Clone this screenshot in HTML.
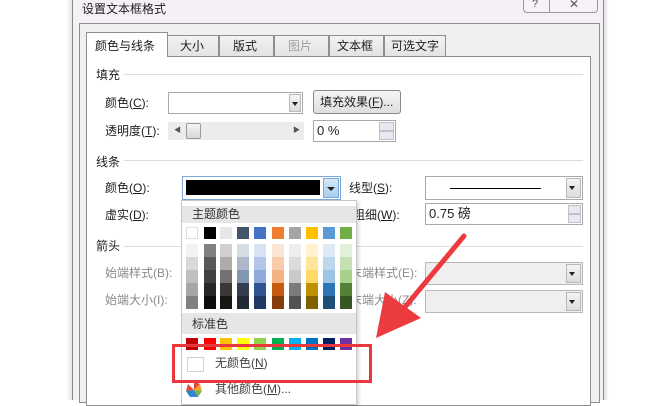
<!DOCTYPE html>
<html><head><meta charset="utf-8"><style>
*{margin:0;padding:0;box-sizing:border-box}
body{width:650px;height:400px;overflow:hidden;background:#fff;position:relative;font-family:"Liberation Sans","Noto Sans CJK SC",sans-serif;font-size:12px;color:#1e1e1e}
.a{position:absolute}
.t{position:absolute;white-space:nowrap;line-height:14px}
.g{color:#8a8a8a}
.combo{position:absolute;background:#fff;border:1px solid #a9a9a9}
.dd{position:absolute;right:1px;top:1px;bottom:1px;width:12px;background:linear-gradient(#f4f4f4,#dcdcdc);border:1px solid #b8b8b8}
.dd:after{content:"";position:absolute;left:2px;top:7px;border-left:3.5px solid transparent;border-right:3.5px solid transparent;border-top:4px solid #222}
.sep{position:absolute;height:1px;background:#dcdcdc}
.sw{position:absolute;width:12px;height:12px}
u{text-decoration:underline}
</style></head><body>
<div class="a" style="left:66px;top:0;width:6px;height:400px;background:linear-gradient(90deg,#fff,#e6e6e6)"></div>
<div class="a" style="left:603px;top:0;width:6px;height:400px;background:linear-gradient(90deg,#d8d8d8,#fff)"></div>
<div class="a" style="left:72px;top:0;width:532px;height:400px;background:#f5f0f6;border-left:1px solid #8a8a8a;border-right:1px solid #8a8a8a"></div>
<div class="t" style="left:82px;top:2px;font-size:12px">设置文本框格式</div>
<div class="a" style="left:523px;top:-2px;width:75px;height:15px;border:1px solid #9a9a9a;border-radius:0 0 4px 4px;background:#f7f2f8"></div>
<div class="a" style="left:549px;top:-2px;width:1px;height:15px;background:#9a9a9a"></div>
<div class="t" style="left:532px;top:-3px;font-size:11px;color:#555">?</div>
<div class="t" style="left:569px;top:-3px;font-size:12px;color:#555">✕</div>
<div class="a" style="left:79px;top:23px;width:521px;height:380px;background:#f0f0f0;border:1px solid #8e8e8e"></div>
<div class="a" style="left:86px;top:56px;width:505px;height:350px;background:#fff;border:1px solid #8e8e8e"></div>
<div class="a" style="left:167px;top:35px;width:52px;height:21px;background:linear-gradient(#f2f2f2,#e3e3e3);border:1px solid #8e8e8e;border-bottom:none"></div>
<div class="a" style="left:219px;top:35px;width:55px;height:21px;background:linear-gradient(#f2f2f2,#e3e3e3);border:1px solid #8e8e8e;border-bottom:none"></div>
<div class="a" style="left:274px;top:35px;width:55px;height:21px;background:linear-gradient(#f2f2f2,#e3e3e3);border:1px solid #8e8e8e;border-bottom:none"></div>
<div class="a" style="left:329px;top:35px;width:55px;height:21px;background:linear-gradient(#f2f2f2,#e3e3e3);border:1px solid #8e8e8e;border-bottom:none"></div>
<div class="a" style="left:384px;top:35px;width:62px;height:21px;background:linear-gradient(#f2f2f2,#e3e3e3);border:1px solid #8e8e8e;border-bottom:none"></div>
<div class="a" style="left:86px;top:32px;width:82px;height:25px;background:#fff;border:1px solid #8e8e8e;border-bottom:none"></div>
<div class="t" style="left:95px;top:39px">颜色与线条</div>
<div class="t" style="left:180px;top:39px">大小</div>
<div class="t" style="left:233px;top:39px">版式</div>
<div class="t g" style="left:288px;top:39px;color:#a0a0a0">图片</div>
<div class="t" style="left:337px;top:39px">文本框</div>
<div class="t" style="left:391px;top:39px">可选文字</div>
<div class="t" style="left:96px;top:68px">填充</div>
<div class="sep" style="left:124px;top:74px;width:459px"></div>
<div class="t" style="left:105px;top:96px">颜色(<u>C</u>):</div>
<div class="combo" style="left:168px;top:92px;width:135px;height:22px"><div class="dd"></div></div>
<div class="a" style="left:313px;top:90px;width:88px;height:24px;border:1px solid #8a8a8a;border-radius:3px;background:linear-gradient(#f6f6f6,#dedede)"></div>
<div class="t" style="left:320px;top:95px">填充效果(<u>F</u>)...</div>
<div class="t" style="left:105px;top:124px">透明度(<u>T</u>):</div>
<div class="a" style="left:168px;top:122px;width:136px;height:18px;background:#ececec"></div>
<div class="t" style="left:174px;top:124px;font-size:7px;color:#555">◀</div>
<div class="t" style="left:293px;top:124px;font-size:7px;color:#555">▶</div>
<div class="a" style="left:186px;top:123px;width:15px;height:16px;border:1px solid #9a9a9a;border-radius:2px;background:linear-gradient(#f4f4f4,#d8d8d8)"></div>
<div class="combo" style="left:313px;top:120px;width:83px;height:22px"></div>
<div class="t" style="left:317px;top:124px;font-size:13px">0 %</div>
<div class="a" style="left:379px;top:122px;width:15px;height:9px;background:#e8e8f0;border:1px solid #c0c0c8"></div>
<div class="a" style="left:379px;top:131px;width:15px;height:9px;background:#e8e8f0;border:1px solid #c0c0c8"></div>
<div class="t" style="left:96px;top:155px">线条</div>
<div class="sep" style="left:124px;top:160px;width:459px"></div>
<div class="t" style="left:105px;top:181px">颜色(<u>O</u>):</div>
<div class="combo" style="left:182px;top:176px;width:159px;height:24px;border-color:#7aa7d8"></div>
<div class="a" style="left:186px;top:180px;width:134px;height:15px;background:#000"></div>
<div class="a" style="left:323px;top:178px;width:16px;height:20px;background:linear-gradient(#d6e8f8,#a8cdf0);border:1px solid #7aa7d8"></div>
<div class="a" style="left:327px;top:187px;border-left:4px solid transparent;border-right:4px solid transparent;border-top:4px solid #222"></div>
<div class="t" style="left:349px;top:181px">线型(<u>S</u>):</div>
<div class="combo" style="left:425px;top:176px;width:158px;height:24px"><div class="dd" style="width:15px"></div></div>
<div class="a" style="left:450px;top:188px;width:91px;height:1px;background:#000"></div>
<div class="t" style="left:105px;top:208px">虚实(<u>D</u>):</div>
<div class="t" style="left:353px;top:208px">粗细(<u>W</u>):</div>
<div class="combo" style="left:425px;top:203px;width:158px;height:22px"></div>
<div class="t" style="left:429px;top:207px;font-size:13px">0.75 磅</div>
<div class="a" style="left:568px;top:205px;width:13px;height:9px;background:#e8e8f0;border:1px solid #c0c0c8"></div>
<div class="a" style="left:568px;top:214px;width:13px;height:9px;background:#e8e8f0;border:1px solid #c0c0c8"></div>
<div class="t" style="left:96px;top:239px">箭头</div>
<div class="sep" style="left:124px;top:246px;width:459px"></div>
<div class="t g" style="left:105px;top:266px">始端样式(B):</div>
<div class="t g" style="left:105px;top:293px">始端大小(I):</div>
<div class="t g" style="left:350px;top:266px">末端样式(E):</div>
<div class="t g" style="left:350px;top:293px">末端大小(Z):</div>
<div class="combo" style="left:425px;top:262px;width:158px;height:23px;background:#efefef;border-color:#b8b8b8"><div class="dd" style="width:15px"></div></div>
<div class="combo" style="left:425px;top:290px;width:158px;height:23px;background:#efefef;border-color:#b8b8b8"><div class="dd" style="width:15px"></div></div>
<div class="a" style="left:181px;top:200px;width:176px;height:205px;background:#fff;border:1px solid #c6c6c6;box-shadow:2px 2px 3px rgba(0,0,0,.15)"></div>
<div class="a" style="left:182px;top:206px;width:174px;height:17px;background:#e6e6e6"></div>
<div class="t" style="left:192px;top:207px;color:#333">主题颜色</div>
<div class="a" style="left:182px;top:313px;width:174px;height:21px;background:#e6e6e6"></div>
<div class="t" style="left:192px;top:317px;color:#333">标准色</div>
<div id="pal"></div>
<div class="a" style="left:187px;top:357px;width:17px;height:15px;border:1px solid #d0d0d0"></div>
<div class="t" style="left:215px;top:356px;color:#444">无颜色(<u>N</u>)</div>
<svg class="a" style="left:185px;top:381px" width="18" height="16" viewBox="0 0 18 16"><path d="M9 9 L9 0 L15 3Z" fill="#e8453c"/><path d="M9 9 L15 3 L17 10Z" fill="#f5a623"/><path d="M9 9 L17 10 L13 16Z" fill="#7cb342"/><path d="M9 9 L13 16 L5 16Z" fill="#3b7dd8"/><path d="M9 9 L5 16 L1 10Z" fill="#1e88c8"/><path d="M9 9 L1 10 L3 3Z" fill="#e8453c"/></svg>
<div class="t" style="left:215px;top:382px;color:#444">其他颜色(<u>M</u>)...</div>
<div class="a" style="left:172px;top:344px;width:200px;height:39px;border:3px solid #e8383d"></div>
<svg class="a" style="left:0;top:0" width="650" height="400"><line x1="464" y1="236" x2="400" y2="313" stroke="#ec3b3f" stroke-width="5" stroke-linecap="round"/><polygon points="376,338 385,292 421,318" fill="#ec3b3f"/></svg>
<script>
var xs=[186,204,220,237,254,272,289,306,323,340];
var theme=['#ffffff','#000000','#e7e6e6','#44546a','#4472c4','#ed7d31','#a5a5a5','#ffc000','#5b9bd5','#70ad47'];
var shades=[
['#f2f2f2','#d9d9d9','#bfbfbf','#a6a6a6','#808080'],
['#808080','#595959','#404040','#262626','#0d0d0d'],
['#d0cece','#aeabab','#757171','#3b3838','#171616'],
['#d6dce4','#adb9ca','#8497b0','#333f4f','#222a35'],
['#d9e2f3','#b4c6e7','#8eaadb','#2f5496','#1f3864'],
['#fbe5d5','#f7cbac','#f4b183','#c55a11','#843c0b'],
['#ededed','#dbdbdb','#c9c9c9','#7b7b7b','#525252'],
['#fff2cc','#ffe699','#ffd966','#bf9000','#7f6000'],
['#deebf6','#bdd7ee','#9dc3e6','#2e75b5','#1f4e79'],
['#e2efd9','#c5e0b3','#a8d08d','#538135','#375623']];
var std=['#c00000','#ff0000','#ffc000','#ffff00','#92d050','#00b050','#00b0f0','#0070c0','#002060','#7030a0'];
var h='';
for(var i=0;i<10;i++){
h+='<div class="sw" style="left:'+xs[i]+'px;top:227px;background:'+theme[i]+';'+(i==0?'border:1px solid #ddd':'')+'"></div>';
for(var j=0;j<5;j++)h+='<div class="sw" style="left:'+xs[i]+'px;top:'+(244+j*13)+'px;height:13px;background:'+shades[i][j]+'"></div>';
h+='<div class="sw" style="left:'+xs[i]+'px;top:338px;background:'+std[i]+'"></div>';
}
document.getElementById('pal').innerHTML=h;
</script>
</body></html>
